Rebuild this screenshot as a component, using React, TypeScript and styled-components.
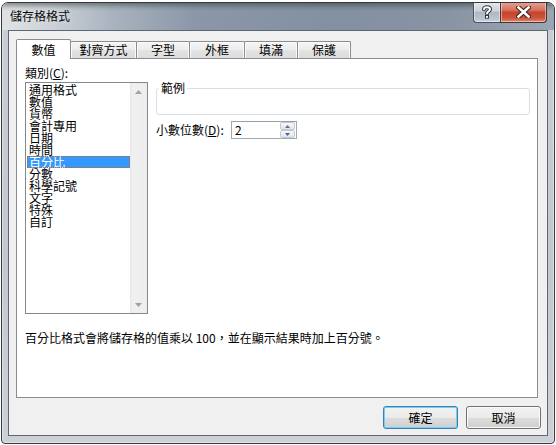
import React from "react";
import styled, { createGlobalStyle } from "styled-components";

const GlobalStyle = createGlobalStyle`
  html, body { margin: 0; padding: 0; background: #ffffff; }
  body {
    font-family: "Noto Sans CJK TC", "Noto Sans", "Liberation Sans", sans-serif;
    font-size: 12px;
    color: #000;
  }
  * { box-sizing: border-box; }
`;

const Stage = styled.div`
  width: 556px;
  height: 445px;
  padding: 2px 0 0 1px;
  overflow: hidden;
  background: #ffffff;
`;

const Window = styled.div`
  width: 554px;
  height: 442px;
  display: flex;
  flex-direction: column;
  border: 1px solid #34393f;
  border-radius: 7px 7px 4px 4px;
  overflow: hidden;
  background: linear-gradient(to bottom, #c9ced4, #c3c8ce 60%, #cdd1d6);
  box-shadow: inset 0 0 0 1px rgba(255, 255, 255, 0.45);
`;

const TitleBar = styled.div`
  height: 27px;
  flex: none;
  display: flex;
  align-items: flex-start;
  justify-content: space-between;
  padding-left: 8px;
  background:
    linear-gradient(to bottom, rgba(35, 48, 40, 0.45) 0, rgba(35, 48, 40, 0.1) 5px, rgba(35, 48, 40, 0) 8px),
    linear-gradient(to right, #dfe2e5 0%, #cfd4da 8%, #a9b3bf 20%, #8b97a8 35%, #8390a2 60%, #8893a3 80%, #9ca6b3 100%);
`;

const Title = styled.span`
  margin-top: 7px;
  line-height: 12px;
  font-size: 12px;
  color: #0b0b0b;
  text-shadow: 0 0 5px rgba(255, 255, 255, 0.6);
`;

const CaptionGroup = styled.div`
  display: flex;
  margin-right: 7px;
  margin-top: -1px;
  height: 21px;
`;

const CaptionButton = styled.div<{ $variant: "help" | "close" }>`
  width: ${(p) => (p.$variant === "close" ? 47 : 27)}px;
  height: 21px;
  display: flex;
  align-items: center;
  justify-content: center;
  border: 1px solid ${(p) => (p.$variant === "close" ? "#4a3030" : "#49525e")};
  border-top: none;
  border-radius: ${(p) => (p.$variant === "close" ? "0 0 4px 0" : "0 0 0 4px")};
  ${(p) => (p.$variant === "help" ? "border-right: none;" : "")}
  background: ${(p) =>
    p.$variant === "close"
      ? "linear-gradient(to bottom, #e6a394 0%, #d7735f 40%, #c6442c 52%, #cb543a 80%, #dc8c74 100%)"
      : "linear-gradient(to bottom, #e6e9ed 0%, #cbd1d8 45%, #aeb8c4 52%, #bcc5cf 85%, #cdd4dc 100%)"};
  box-shadow: inset 0 0 0 1px rgba(255, 255, 255, 0.45);
`;

const ClientArea = styled.div`
  flex: 1;
  margin: 0 6px 7px 6px;
  display: flex;
  flex-direction: column;
  background: #f0f0f0;
  border: 1px solid #5e6875;
  padding: 8px 6px 6px 7px;
`;

const TabStrip = styled.div`
  display: flex;
  align-items: flex-end;
  height: 20px;
  margin-bottom: -1px;
  position: relative;
  z-index: 1;
`;

const Tab = styled.div<{ $active?: boolean; $width: number }>`
  width: ${(p) => p.$width}px;
  height: ${(p) => (p.$active ? 20 : 17)}px;
  margin-bottom: ${(p) => (p.$active ? 0 : 1)}px;
  margin-left: -1px;
  &:first-child { margin-left: 0; }
  display: flex;
  align-items: center;
  justify-content: center;
  line-height: 12px;
  border: 1px solid #898c95;
  border-bottom: none;
  border-radius: 2px 2px 0 0;
  position: relative;
  z-index: ${(p) => (p.$active ? 2 : 1)};
  background: ${(p) => (p.$active ? "#ffffff" : "linear-gradient(to bottom, #f5f5f5 0%, #ececec 50%, #e3e3e3 52%, #dcdcdc 100%)")};
  box-shadow: ${(p) => (p.$active ? "none" : "inset 1px 1px 0 #fcfcfc, inset -1px 0 0 #fcfcfc")};
`;

const Panel = styled.div`
  width: 522px;
  height: 340px;
  flex: none;
  border: 1px solid #898c95;
  background: #ffffff;
  padding: 8px 0 0 8px;
  display: grid;
  grid-template-columns: 123px 1fr;
  grid-template-rows: auto auto auto;
  column-gap: 8px;
  row-gap: 3px;
  align-content: start;
`;

const FieldLabel = styled.div`
  line-height: 12px;
  height: 12px;
  white-space: nowrap;
`;

const ListBox = styled.div`
  width: 123px;
  height: 232px;
  border: 1px solid #828790;
  display: flex;
  background: #ffffff;
`;

const ListItems = styled.div`
  flex: 1;
  padding: 1px 0 0 1px;
  display: flex;
  flex-direction: column;
`;

const ListItem = styled.div<{ $selected?: boolean }>`
  height: 12px;
  line-height: 12px;
  padding-left: 2px;
  white-space: nowrap;
  background: ${(p) => (p.$selected ? "#3399ff" : "transparent")};
  color: ${(p) => (p.$selected ? "#ffffff" : "#000000")};
  outline: ${(p) => (p.$selected ? "1px dotted #c8691a" : "none")};
  outline-offset: -1px;
`;

const ScrollBar = styled.div`
  width: 17px;
  display: flex;
  flex-direction: column;
  justify-content: space-between;
  background: linear-gradient(to right, #e4e4e4 0, #f0f0f0 2px, #ededed 100%);
`;

const ScrollArrow = styled.div`
  height: 17px;
  display: flex;
  align-items: center;
  justify-content: center;
`;

const RightColumn = styled.div`
  display: flex;
  flex-direction: column;
  gap: 6px;
`;

const SampleGroup = styled.fieldset`
  margin: 0;
  padding: 0;
  width: 374px;
  height: 33px;
  min-width: 0;
  border: 1px solid #d5dfe5;
  border-radius: 3px;
`;

const SampleLegend = styled.legend`
  margin-left: 2px;
  padding: 0 2px;
  line-height: 12px;
  font-size: 12px;
`;

const SpinRow = styled.div`
  display: flex;
  align-items: center;
`;

const SpinLabel = styled.div`
  width: 75px;
  line-height: 12px;
  white-space: nowrap;
`;

const SpinBox = styled.div`
  width: 66px;
  height: 18px;
  border: 1px solid #a4a8b0;
  border-top-color: #9b9fa7;
  background: #ffffff;
  display: flex;
`;

const SpinValue = styled.div`
  flex: 1;
  padding-left: 3px;
  line-height: 16px;
`;

const SpinButtons = styled.div`
  width: 16px;
  display: flex;
  flex-direction: column;
  padding: 0 1px 0 0;
`;

const SpinButton = styled.div`
  flex: 1;
  display: flex;
  align-items: center;
  justify-content: center;
  border: 1px solid #c5c8cd;
  border-radius: 2px;
  background: linear-gradient(to bottom, #f7f8fa, #e1e4e9);
`;

const Description = styled.div`
  grid-column: 1 / -1;
  margin-top: 15px;
  line-height: 12px;
  white-space: nowrap;
`;

const ButtonRow = styled.div`
  margin-top: 8px;
  display: flex;
  justify-content: flex-end;
  gap: 8px;
`;

const DialogButton = styled.div<{ $default?: boolean }>`
  width: 75px;
  height: 23px;
  display: flex;
  align-items: center;
  justify-content: center;
  line-height: 12px;
  border: 1px solid ${(p) => (p.$default ? "#3c7fb1" : "#707070")};
  border-radius: 3px;
  background: linear-gradient(to bottom, #f2f2f2 0%, #ebebeb 50%, #dddddd 52%, #cfcfcf 100%);
  box-shadow: ${(p) => (p.$default ? "inset 0 0 0 1px #6fd0f8" : "inset 0 0 0 1px #fbfbfb")};
`;

const tabs = [
  { label: "數值", width: 55 },
  { label: "對齊方式", width: 67 },
  { label: "字型", width: 54 },
  { label: "外框", width: 56 },
  { label: "填滿", width: 54 },
  { label: "保護", width: 54 },
];

const categories = [
  "通用格式",
  "數值",
  "貨幣",
  "會計專用",
  "日期",
  "時間",
  "百分比",
  "分數",
  "科學記號",
  "文字",
  "特殊",
  "自訂",
];

const HelpGlyph = () => (
  <svg width="12" height="14" viewBox="0 0 12 14">
    <path d="M3 4.2 C3 1.6 9 1.6 9 4.3 C9 6.4 6 6.3 6 8.6" fill="none" stroke="#2f3742" strokeWidth="4" strokeLinecap="round" />
    <rect x="4" y="10" width="4" height="3.6" fill="#2f3742" />
    <path d="M3 4.2 C3 1.6 9 1.6 9 4.3 C9 6.4 6 6.3 6 8.6" fill="none" stroke="#ffffff" strokeWidth="2" strokeLinecap="round" />
    <rect x="5" y="11" width="2" height="1.8" fill="#ffffff" />
  </svg>
);

const CloseGlyph = () => (
  <svg width="15" height="12" viewBox="0 0 15 12">
    <path d="M2.5 1.5 L12.5 10.5 M12.5 1.5 L2.5 10.5" stroke="#3a2020" strokeWidth="4.6" strokeLinecap="square" />
    <path d="M2.5 1.5 L12.5 10.5 M12.5 1.5 L2.5 10.5" stroke="#ffffff" strokeWidth="2.6" strokeLinecap="square" />
  </svg>
);

const Arrow = ({ dir, color }: { dir: "up" | "down"; color: string }) => (
  <svg width="7" height="4" viewBox="0 0 7 4">
    {dir === "up" ? <polygon points="0,4 7,4 3.5,0" fill={color} /> : <polygon points="0,0 7,0 3.5,4" fill={color} />}
  </svg>
);

const SmallArrow = ({ dir, color }: { dir: "up" | "down"; color: string }) => (
  <svg width="5" height="3" viewBox="0 0 5 3">
    {dir === "up" ? <polygon points="0,3 5,3 2.5,0" fill={color} /> : <polygon points="0,0 5,0 2.5,3" fill={color} />}
  </svg>
);

export default function App() {
  return (
    <>
      <GlobalStyle />
      <Stage>
        <Window>
          <TitleBar>
            <Title>儲存格格式</Title>
            <CaptionGroup>
              <CaptionButton $variant="help">
                <HelpGlyph />
              </CaptionButton>
              <CaptionButton $variant="close">
                <CloseGlyph />
              </CaptionButton>
            </CaptionGroup>
          </TitleBar>
          <ClientArea>
            <TabStrip>
              {tabs.map((t, i) => (
                <Tab key={t.label} $active={i === 0} $width={t.width}>
                  {t.label}
                </Tab>
              ))}
            </TabStrip>
            <Panel>
              <FieldLabel>
                類別(<u>C</u>):
              </FieldLabel>
              <div />
              <ListBox>
                <ListItems>
                  {categories.map((c) => (
                    <ListItem key={c} $selected={c === "百分比"}>
                      {c}
                    </ListItem>
                  ))}
                </ListItems>
                <ScrollBar>
                  <ScrollArrow>
                    <Arrow dir="up" color="#a2a2a2" />
                  </ScrollArrow>
                  <ScrollArrow>
                    <Arrow dir="down" color="#a2a2a2" />
                  </ScrollArrow>
                </ScrollBar>
              </ListBox>
              <RightColumn>
                <SampleGroup>
                  <SampleLegend>範例</SampleLegend>
                </SampleGroup>
                <SpinRow>
                  <SpinLabel>
                    小數位數(<u>D</u>):
                  </SpinLabel>
                  <SpinBox>
                    <SpinValue>2</SpinValue>
                    <SpinButtons>
                      <SpinButton>
                        <SmallArrow dir="up" color="#5c6f8e" />
                      </SpinButton>
                      <SpinButton>
                        <SmallArrow dir="down" color="#3f62a8" />
                      </SpinButton>
                    </SpinButtons>
                  </SpinBox>
                </SpinRow>
              </RightColumn>
              <Description>百分比格式會將儲存格的值乘以 100，並在顯示結果時加上百分號。</Description>
            </Panel>
            <ButtonRow>
              <DialogButton $default>確定</DialogButton>
              <DialogButton>取消</DialogButton>
            </ButtonRow>
          </ClientArea>
        </Window>
      </Stage>
    </>
  );
}
